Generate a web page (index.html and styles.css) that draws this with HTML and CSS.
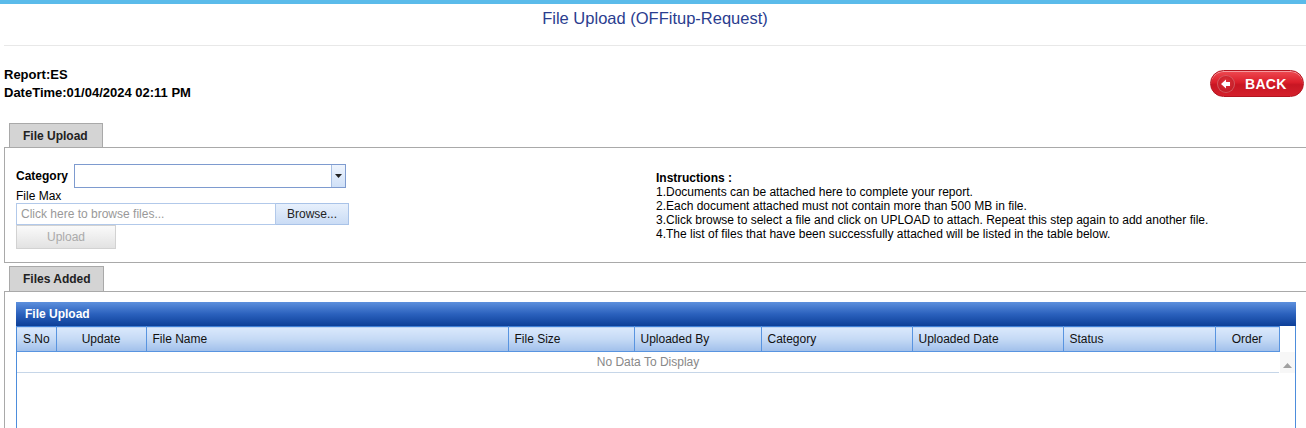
FILE: index.html
```html
<!DOCTYPE html>
<html>
<head>
<meta charset="utf-8">
<link rel="stylesheet" href="styles.css">
</head>
<body>
<div class="topbar"></div>
<div class="title">File Upload (OFFitup-Request)</div>
<div class="rule"></div>
<div class="info-row">
  <div class="report">
    <div>Report:ES</div>
    <div>DateTime:01/04/2024 02:11 PM</div>
  </div>
  <a class="back-btn">
    <span class="back-icon">
      <svg width="14" height="14" viewBox="0 0 14 14"><path d="M2 7 L7 2.5 L7 5 L11 5 L11 9 L7 9 L7 11.5 Z" fill="#fff"/></svg>
    </span>
    <span class="back-text">BACK</span>
  </a>
</div>

<div class="tab tab-first">File Upload</div>
<div class="panel panel-upload">
  <div class="form">
    <div class="cat-row">
      <span class="cat-label">Category</span>
      <div class="select"><span class="select-btn"><svg width="7" height="4" viewBox="0 0 7 4"><path d="M0 0 H7 L3.5 4 Z" fill="#222"/></svg></span></div>
    </div>
    <div class="file-max">File Max</div>
    <div class="file-row">
      <div class="file-input">Click here to browse files...</div>
      <div class="browse">Browse...</div>
    </div>
    <div class="upload-btn">Upload</div>
  </div>
  <div class="instructions">
    <div class="instr-head">Instructions :</div>
    <div>1.Documents can be attached here to complete your report.</div>
    <div>2.Each document attached must not contain more than 500 MB in file.</div>
    <div>3.Click browse to select a file and click on UPLOAD to attach. Repeat this step again to add another file.</div>
    <div>4.The list of files that have been successfully attached will be listed in the table below.</div>
  </div>
</div>

<div class="tab tab-second">Files Added</div>
<div class="panel panel-files">
  <div class="grid">
    <div class="grid-title">File Upload</div>
    <div class="grid-body">
      <table class="grid-table">
        <colgroup>
          <col class="c-sno"><col class="c-update"><col class="c-name"><col class="c-size"><col class="c-by"><col class="c-cat"><col class="c-date"><col class="c-status"><col class="c-order">
        </colgroup>
        <thead>
          <tr>
            <th>S.No</th><th class="center">Update</th><th>File Name</th><th>File Size</th><th>Uploaded By</th><th>Category</th><th>Uploaded Date</th><th>Status</th><th class="center">Order</th>
          </tr>
        </thead>
        <tbody>
          <tr class="empty-row"><td colspan="9">No Data To Display</td></tr>
        </tbody>
      </table>
      <div class="scroll-col">
        <div class="scroll-head"></div>
        <div class="scroll-track"><svg width="9" height="5" viewBox="0 0 9 5"><path d="M0 5 L4.5 0 L9 5 Z" fill="#a0a0a0"/></svg></div>
      </div>
    </div>
  </div>
</div>
</body>
</html>
```

FILE: styles.css
```css
html, body {
  margin: 0;
  padding: 0;
  background: #fff;
  overflow: hidden;
}
body {
  font-family: "Liberation Sans", Arial, sans-serif;
  font-size: 12px;
  color: #000;
  width: 1306px;
  height: 428px;
}
.topbar {
  height: 4px;
  background: #5bbbea;
}
.title {
  text-align: center;
  font-size: 16.5px;
  line-height: 22px;
  color: #2a3d8f;
  padding-top: 3px;
  height: 38px;
  padding-left: 4px;
}
.rule {
  margin-left: 4px;
  border-top: 1px solid #e8e8e8;
}
.info-row {
  display: flex;
  justify-content: space-between;
  align-items: flex-start;
  padding: 20px 2px 0 4px;
  height: 57px;
}
.report {
  font-weight: bold;
  font-size: 13px;
  line-height: 18px;
}
.back-btn {
  margin-top: 4px;
  width: 94px;
  height: 27px;
  box-sizing: border-box;
  border-radius: 14px;
  background: linear-gradient(#ee4a52 0%, #dc1f2b 45%, #c81623 55%, #d4202c 100%);
  border: 1px solid #b31520;
  box-shadow: inset 0 1px 0 rgba(255,255,255,0.45);
  display: flex;
  align-items: center;
  padding-left: 6px;
  gap: 10px;
}
.back-icon {
  width: 18px;
  height: 18px;
  border-radius: 50%;
  background: radial-gradient(circle at 50% 40%, #e0323c, #b5121c);
  box-shadow: inset 0 0 0 1px rgba(255,255,255,0.25);
  display: flex;
  align-items: center;
  justify-content: center;
}
.back-text {
  color: #fff;
  font-weight: bold;
  font-size: 14px;
  letter-spacing: 0.3px;
}
.tab {
  margin-left: 9px;
  width: 94px;
  height: 24px;
  box-sizing: border-box;
  background: #d4d4d4;
  border: 1px solid #a9a9a9;
  border-bottom: none;
  font-weight: bold;
  font-size: 12px;
  line-height: 24px;
  padding-left: 13px;
  color: #222;
}
.tab-second {
  margin-top: 3px;
  width: 95px;
  height: 25px;
}
.panel {
  margin-left: 4px;
  width: 1310px;
  box-sizing: border-box;
  border: 1px solid #a9a9a9;
}
.panel-upload {
  height: 116px;
  display: flex;
  padding: 16px 0 0 11px;
}
.form {
  width: 640px;
}
.cat-row {
  display: flex;
  align-items: center;
  height: 24px;
}
.cat-label {
  font-weight: bold;
  width: 58px;
}
.select {
  width: 272px;
  height: 24px;
  box-sizing: border-box;
  border: 1px solid #7e9bcf;
  display: flex;
  justify-content: flex-end;
  background: #fff;
}
.select-btn {
  width: 13px;
  border-left: 1px solid #a7bfe3;
  background: linear-gradient(#eef4fd, #cfe0f7);
  display: flex;
  align-items: center;
  justify-content: center;
}
.file-max {
  line-height: 14px;
  margin-top: 1px;
}
.file-row {
  display: flex;
  height: 22px;
}
.file-input {
  width: 260px;
  box-sizing: border-box;
  border: 1px solid #b2c9ea;
  color: #999;
  line-height: 20px;
  padding-left: 4px;
}
.browse {
  width: 73px;
  box-sizing: border-box;
  border: 1px solid #a9c3e8;
  border-left: none;
  background: linear-gradient(#e7f0fc, #cadcf5);
  text-align: center;
  line-height: 20px;
  color: #222;
}
.upload-btn {
  width: 100px;
  height: 24px;
  box-sizing: border-box;
  border: 1px solid #d2d2d2;
  background: linear-gradient(#fafafa, #e2e2e2);
  color: #aaa;
  text-align: center;
  line-height: 22px;
}
.instructions {
  font-family: "Liberation Sans", Arial, sans-serif;
  font-size: 12px;
  line-height: 14px;
  padding-top: 7px;
}
.instr-head {
  font-weight: bold;
  font-size: 12px;
}
.panel-files {
  height: 150px;
  padding: 10px 0 0 11px;
}
.grid {
  width: 1280px;
  box-sizing: border-box;
  border: 1px solid #4d8ddc;
  border-top: none;
  height: 200px;
}
.grid-title {
  height: 24px;
  background: linear-gradient(#5d90dd, #2b61bd 50%, #0d3f98);
  color: #fff;
  font-weight: bold;
  font-size: 12px;
  line-height: 24px;
  padding-left: 9px;
  margin: 0 -1px;
}
.grid-body {
  display: flex;
}
.grid-table {
  width: 1262px;
  table-layout: fixed;
  border-collapse: collapse;
}
.c-sno { width: 39px; }
.c-update { width: 90px; }
.c-name { width: 362px; }
.c-size { width: 126px; }
.c-by { width: 127px; }
.c-cat { width: 151px; }
.c-date { width: 151px; }
.c-status { width: 152px; }
.c-order { width: 64px; }
.grid-table th {
  height: 24px;
  font-weight: normal;
  text-align: left;
  padding: 0 0 0 6px;
  font-size: 12px;
  color: #111;
  background: linear-gradient(#dbe9fc, #c4d9f5 50%, #a0bfea);
  border: 1px solid #5894e0;
  border-top: 1px solid #3f7fd6;
}
.grid-table th:first-child {
  border-left: none;
}
.grid-table th.center {
  text-align: center;
  padding: 0;
}
.empty-row td {
  height: 20px;
  text-align: center;
  color: #888;
  font-size: 12px;
  border-bottom: 1px solid #c6d6e8;
  padding: 0;
}
.scroll-col {
  width: 16px;
  display: flex;
  flex-direction: column;
}
.scroll-head {
  height: 26px;
  background: #fff;
}
.scroll-track {
  flex: 1;
  background: #f7f7f7;
  display: flex;
  justify-content: center;
  align-items: flex-start;
  padding-top: 11px;
}
```
